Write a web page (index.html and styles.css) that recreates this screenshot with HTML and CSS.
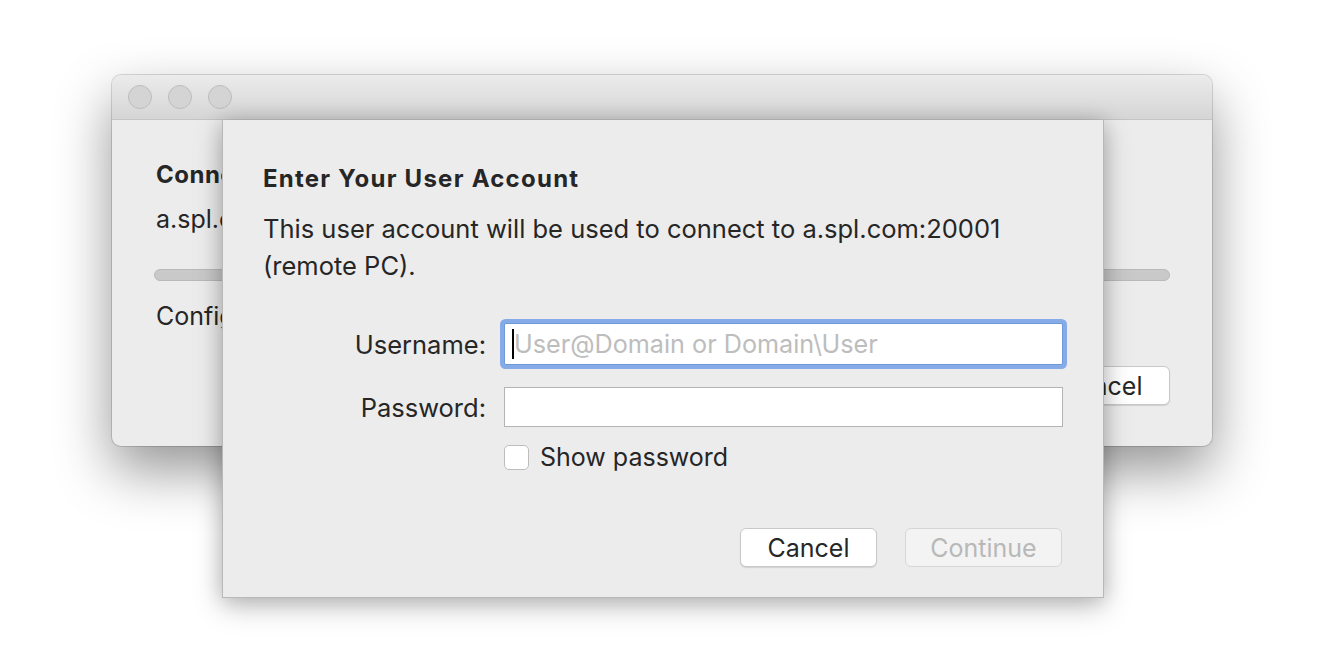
FILE: index.html
```html
<!DOCTYPE html>
<html>
<head>
<meta charset="utf-8">
<link rel="stylesheet" href="styles.css">
</head>
<body>
<div class="desktop">
  <div class="window">
    <div class="titlebar">
      <span class="light"></span><span class="light"></span><span class="light"></span>
    </div>
    <div class="win-body">
      <div class="win-title clip">Connecting</div>
      <div class="win-host clip">a.spl.com</div>
      <div class="progress"></div>
      <div class="win-status clip">Configuring</div>
      <div class="win-actions"><button class="btn btn-back">Cancel</button></div>
    </div>
  </div>

  <div class="sheet">
    <h1 class="sheet-title">Enter Your User Account</h1>
    <p class="sheet-text">This user account will be used to connect to a.spl.com:20001 (remote PC).</p>
    <div class="form">
      <label class="lbl">Username:</label>
      <div class="field focused"><span class="caret"></span><span class="placeholder">User@Domain or Domain\User</span></div>
      <label class="lbl">Password:</label>
      <div class="field"></div>
      <span></span>
      <div class="check-row"><span class="checkbox"></span><span class="check-label">Show password</span></div>
    </div>
    <div class="sheet-actions">
      <button class="btn btn-cancel">Cancel</button>
      <button class="btn btn-disabled">Continue</button>
    </div>
  </div>
</div>
</body>
</html>
```

FILE: styles.css
```css
html, body {
  margin: 0;
  padding: 0;
  background: #ffffff;
}
body {
  width: 1324px;
  height: 652px;
  overflow: hidden;
  font-family: Inter, "Helvetica Neue", "Liberation Sans", sans-serif;
  color: #262626;
}
.desktop {
  position: relative;
  width: 1324px;
  height: 652px;
}
.window {
  position: absolute;
  left: 112px;
  top: 75px;
  width: 1100px;
  height: 371px;
  border-radius: 9px;
  background: #ececec;
  box-shadow: 0 0 0 1px rgba(0,0,0,0.14), 0 24px 55px rgba(0,0,0,0.42);
  overflow: hidden;
  display: flex;
  flex-direction: column;
}
.titlebar {
  height: 44px;
  flex: none;
  background: linear-gradient(#ebebeb, #d5d5d5);
  border-bottom: 1px solid #c4c4c4;
  display: flex;
  align-items: center;
  gap: 16px;
  padding-left: 16px;
}
.light {
  width: 22px;
  height: 22px;
  border-radius: 50%;
  background: #d4d4d4;
  border: 1px solid #bdbdbd;
}
.win-body {
  padding: 40px 42px 0 44px;
  display: flex;
  flex-direction: column;
}
.clip {
  width: 66px;
  overflow: hidden;
  white-space: nowrap;
}
.win-title {
  font-weight: 700;
  font-size: 24px;
  letter-spacing: 0.5px;
  line-height: 30px;
}
.win-host {
  font-size: 25px;
  line-height: 30px;
  margin-top: 14px;
}
.progress {
  margin-top: 35px;
  margin-left: -2px;
  height: 10px;
  border-radius: 6px;
  background: #c9c9c9;
  border: 1px solid #b9b9b9;
}
.win-status {
  font-size: 25px;
  line-height: 30px;
  margin-top: 20px;
}
.win-actions {
  display: flex;
  justify-content: flex-end;
  margin-top: 35px;
}
.btn {
  font-family: inherit;
  font-size: 25px;
  height: 39px;
  padding: 0 26px;
  background: #ffffff;
  border: 1px solid #c8c8c8;
  border-radius: 6px;
  color: #262626;
  box-shadow: 0 1px 1px rgba(0,0,0,0.12);
}
.btn-back {
  width: 137px;
  padding: 0;
}
.sheet {
  position: absolute;
  left: 222px;
  top: 120px;
  width: 882px;
  height: 478px;
  box-sizing: border-box;
  background: #ececec;
  border: 1px solid #b8b8b8;
  border-top: none;
  box-shadow: 0 8px 26px rgba(0,0,0,0.26), 0 0 18px rgba(0,0,0,0.12);
  padding: 43px 41px 0 40px;
}
.sheet-title {
  margin: 0;
  font-size: 24px;
  font-weight: 700;
  letter-spacing: 1.25px;
  line-height: 32px;
}
.sheet-text {
  margin: 15px 0 0 0;
  font-size: 25.5px;
  line-height: 37px;
  width: 790px;
}
.form {
  margin-top: 39px;
  display: grid;
  grid-template-columns: 223px 559px;
  column-gap: 18px;
  row-gap: 22px;
  align-items: center;
}
.lbl {
  text-align: right;
  font-size: 25.5px;
}
.field {
  height: 40px;
  box-sizing: border-box;
  background: #fff;
  border: 1px solid #b4b4b4;
  display: flex;
  align-items: center;
  padding-left: 7px;
}
.field.focused {
  height: 42px;
  border: 1px solid #6f99d8;
  box-shadow: 0 0 0 4px #86abe8;
  border-radius: 2px;
}
.caret {
  width: 2px;
  height: 30px;
  background: #000;
}
.placeholder {
  color: #bdbdbd;
  font-size: 25.2px;
}
.check-row {
  display: flex;
  align-items: center;
  gap: 11px;
  margin-top: -7px;
}
.checkbox {
  width: 25px;
  height: 25px;
  box-sizing: border-box;
  background: #fff;
  border: 1px solid #bdbdbd;
  border-radius: 5px;
}
.check-label {
  font-size: 25px;
}
.sheet-actions {
  display: flex;
  justify-content: flex-end;
  gap: 28px;
  margin-top: 56px;
}
.btn-cancel {
  width: 137px;
  padding: 0;
}
.btn-disabled {
  width: 157px;
  padding: 0;
  background: #f3f3f3;
  color: #b8b8b8;
  border-color: #d6d6d6;
  box-shadow: none;
}
```
